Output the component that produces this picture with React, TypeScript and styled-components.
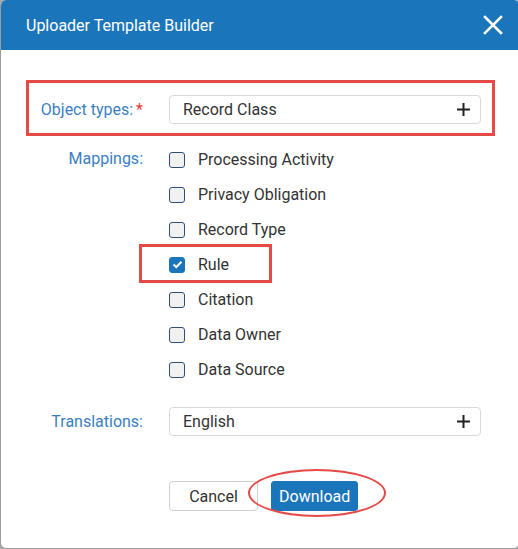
import styled, { createGlobalStyle } from "styled-components";

const GlobalStyle = createGlobalStyle`
  html, body {
    margin: 0;
    padding: 0;
    background: #a8a8a8;
    overflow: hidden;
    font-family: Roboto, "Liberation Sans", sans-serif;
  }
`;

const mappings = [
  { label: "Processing Activity", checked: false },
  { label: "Privacy Obligation", checked: false },
  { label: "Record Type", checked: false },
  { label: "Rule", checked: true, highlight: true },
  { label: "Citation", checked: false },
  { label: "Data Owner", checked: false },
  { label: "Data Source", checked: false },
];

export default function App() {
  return (
    <>
      <GlobalStyle />
      <Dialog>
        <Header>
          <Title>Uploader Template Builder</Title>
          <CloseButton aria-label="Close">
            <svg width="20" height="20" viewBox="0 0 20 20">
              <path d="M2 2 L18 18 M18 2 L2 18" stroke="#fff" strokeWidth="2.6" strokeLinecap="square" />
            </svg>
          </CloseButton>
        </Header>
        <Body>
          <Field $top={45}>
            <Highlight $top={-15} $left={-4} $right={-14} $bottom={-12} />
            <Label>
              Object types:<Required>*</Required>
            </Label>
            <Picker>
              <span>Record Class</span>
              <PlusIcon />
            </Picker>
          </Field>
          <Field $top={18}>
            <Label $start>Mappings:</Label>
            <CheckList>
              {mappings.map((m) => (
                <CheckItem key={m.label}>
                  {m.highlight && <Highlight $top={-3} $left={-30} $width={133} $height={39} />}
                  <Box $checked={m.checked}>
                    {m.checked && (
                      <svg width="11" height="9" viewBox="0 0 11 9">
                        <path d="M1.5 4.5 L4.3 7 L9.5 1.8" stroke="#fff" strokeWidth="2" fill="none" />
                      </svg>
                    )}
                  </Box>
                  {m.label}
                </CheckItem>
              ))}
            </CheckList>
          </Field>
          <Field $top={20}>
            <Label>Translations:</Label>
            <Picker>
              <span>English</span>
              <PlusIcon />
            </Picker>
          </Field>
          <Field $top={45}>
            <span />
            <Actions>
              <Button>Cancel</Button>
              <ButtonWrap>
                <Button $primary>Download</Button>
                <Ellipse />
              </ButtonWrap>
            </Actions>
          </Field>
        </Body>
      </Dialog>
    </>
  );
}

function PlusIcon() {
  return (
    <svg width="13" height="13" viewBox="0 0 13 13">
      <path d="M6.5 0 V13 M0 6.5 H13" stroke="#222" strokeWidth="2" />
    </svg>
  );
}

const Dialog = styled.div`
  box-sizing: border-box;
  width: 520px;
  height: 549px;
  background: #fff;
  border: 1px solid #9c9c9c;
  border-top: none;
  border-radius: 6px;
  overflow: hidden;
`;

const Header = styled.header`
  display: flex;
  align-items: center;
  justify-content: space-between;
  height: 50px;
  padding: 0 16px 0 25px;
  background: #1b75bb;
`;

const Title = styled.h1`
  margin: 0;
  font-size: 16px;
  font-weight: 400;
  color: #fff;
`;

const CloseButton = styled.button`
  display: flex;
  padding: 0;
  background: none;
  border: none;
`;

const Body = styled.div`
  padding: 0 38px 0 29px;
`;

const Field = styled.div<{ $top: number }>`
  position: relative;
  display: grid;
  grid-template-columns: 113px 1fr;
  column-gap: 26px;
  align-items: center;
  margin-top: ${(p) => p.$top}px;
`;

const Label = styled.label<{ $start?: boolean }>`
  align-self: ${(p) => (p.$start ? "start" : "center")};
  line-height: ${(p) => (p.$start ? "35px" : "normal")};
  margin-top: ${(p) => (p.$start ? "-1px" : "0")};
  text-align: right;
  font-size: 16px;
  color: #3a7fc3;
`;

const Required = styled.span`
  margin-left: 3px;
  color: #e53935;
`;

const Picker = styled.div`
  display: flex;
  align-items: center;
  justify-content: space-between;
  box-sizing: border-box;
  height: 29px;
  padding: 0 10px 0 13px;
  border: 1px solid #dadada;
  border-radius: 4px;
  font-size: 16px;
  color: #333;
`;

const CheckList = styled.div`
  display: flex;
  flex-direction: column;
`;

const CheckItem = styled.div`
  position: relative;
  display: flex;
  align-items: center;
  gap: 13px;
  height: 35px;
  font-size: 16px;
  color: #333;
`;

const Box = styled.span<{ $checked?: boolean }>`
  display: flex;
  align-items: center;
  justify-content: center;
  box-sizing: border-box;
  width: 16px;
  height: 16px;
  border: 1.5px solid ${(p) => (p.$checked ? "#1b75bb" : "#2d4f7a")};
  border-radius: 3px;
  background: ${(p) => (p.$checked ? "#1b75bb" : "#f1f1f1")};
`;

const Highlight = styled.div<{
  $top: number;
  $left: number;
  $right?: number;
  $bottom?: number;
  $width?: number;
  $height?: number;
}>`
  position: absolute;
  top: ${(p) => p.$top}px;
  left: ${(p) => p.$left}px;
  ${(p) => (p.$right !== undefined ? `right: ${p.$right}px;` : `width: ${p.$width}px;`)}
  ${(p) => (p.$bottom !== undefined ? `bottom: ${p.$bottom}px;` : `height: ${p.$height}px;`)}
  box-sizing: border-box;
  border: 3px solid #e64a47;
  pointer-events: none;
`;

const Actions = styled.div`
  display: flex;
  gap: 13px;
`;

const ButtonWrap = styled.div`
  position: relative;
  display: flex;
`;

const Button = styled.button<{ $primary?: boolean }>`
  box-sizing: border-box;
  height: 30px;
  padding: 0 ${(p) => (p.$primary ? "7px" : "18px")};
  min-width: ${(p) => (p.$primary ? "87px" : "89px")};
  font-family: inherit;
  font-size: 16px;
  color: ${(p) => (p.$primary ? "#fff" : "#333")};
  background: ${(p) => (p.$primary ? "#1b75bb" : "#fff")};
  border: 1px solid ${(p) => (p.$primary ? "#1b75bb" : "#cfcfcf")};
  border-radius: ${(p) => (p.$primary ? "3px" : "4px")};
`;

const Ellipse = styled.div`
  position: absolute;
  top: -12px;
  left: -23px;
  width: 138px;
  height: 48px;
  box-sizing: border-box;
  border: 2px solid #e64a47;
  border-radius: 50%;
  pointer-events: none;
`;
